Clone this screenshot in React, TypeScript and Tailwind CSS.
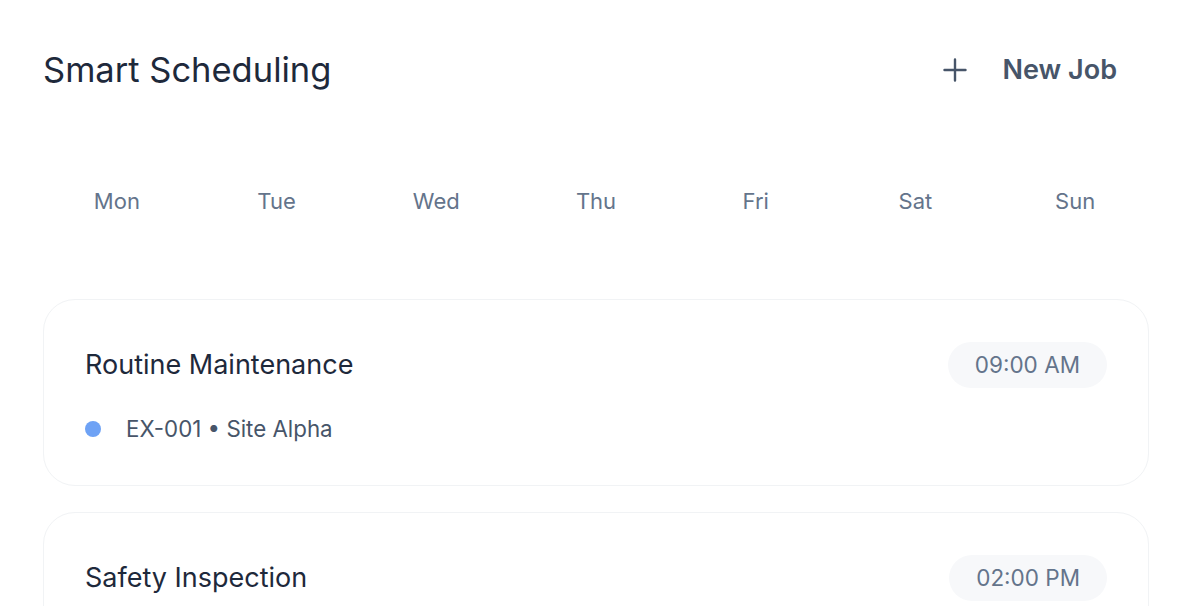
import React from "react";

const days = ["Mon", "Tue", "Wed", "Thu", "Fri", "Sat", "Sun"];

const jobs = [
  { title: "Routine Maintenance", time: "09:00 AM", code: "EX-001", site: "Site Alpha", dot: "bg-[#6ea2f5]" },
  { title: "Safety Inspection", time: "02:00 PM", code: "EX-002", site: "Site Beta", dot: "bg-[#6ea2f5]" },
];

export default function App() {
  return (
    <div className="h-[606px] overflow-hidden bg-white px-[43px] pt-[48px] font-['Inter',sans-serif]">
      <div className="flex h-[44px] items-center justify-between">
        <h1 className="text-[34.5px] leading-[44px] font-normal text-[#1e293b]">Smart Scheduling</h1>
        <button className="flex items-center gap-[36px] pr-[32px] text-[#475569]">
          <svg width="24" height="24" viewBox="0 0 24 24" fill="none" stroke="currentColor" strokeWidth="2.4" strokeLinecap="round">
            <path d="M12 1.5v21M1.5 12h21" />
          </svg>
          <span className="text-[27px] font-semibold">New Job</span>
        </button>
      </div>

      <div className="mx-[-6px] mt-[95px] grid grid-cols-7">
        {days.map((d) => (
          <div key={d} className="text-center text-[22px] leading-[28px] text-[#64748b]">{d}</div>
        ))}
      </div>

      <div className="mt-[84px] flex flex-col gap-[26px]">
        {jobs.map((j) => (
          <div key={j.title} className="rounded-[32px] border border-[#f1f3f5] bg-white px-[41px] pt-[42px] pb-[41px]">
            <div className="flex h-[46px] items-center justify-between">
              <div className="text-[27px] leading-[34px] text-[#1e293b]">{j.title}</div>
              <div className="flex h-[46px] items-center rounded-full bg-[#f7f8fa] px-[27px] text-[22.5px] text-[#64748b]">{j.time}</div>
            </div>
            <div className="mt-[26px] flex h-[30px] items-center gap-[25px]">
              <span className={`h-[16px] w-[16px] rounded-full ${j.dot}`}></span>
              <span className="text-[22.3px] text-[#475569]">{j.code} • {j.site}</span>
            </div>
          </div>
        ))}
      </div>
    </div>
  );
}
